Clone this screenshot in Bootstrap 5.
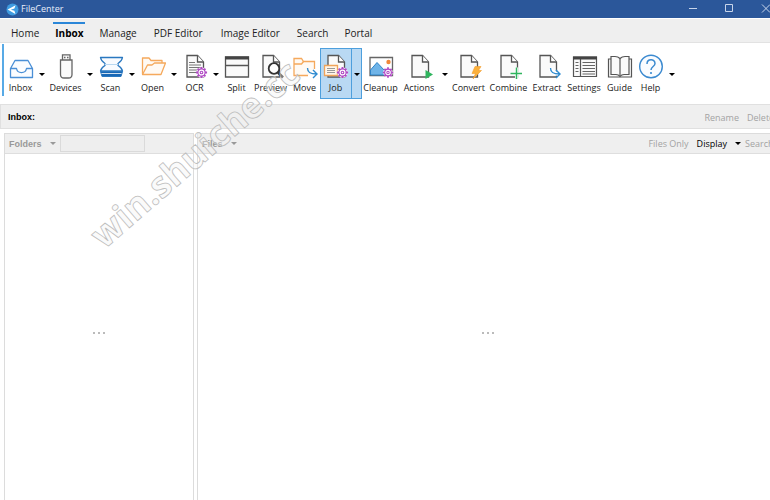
<!DOCTYPE html>
<html lang="en">
<head>
<meta charset="utf-8">
<meta name="viewport" content="width=device-width, initial-scale=1">
<title>FileCenter</title>
<link rel="stylesheet" href="https://cdn.jsdelivr.net/npm/bootstrap@5.3.0/dist/css/bootstrap.min.css">
<style>
  body { font-family: "Open Sans", "Noto Sans", sans-serif; font-size: 9px; line-height: 12px; color: #222; background: #fff; }
  button { border: 0; background: none; padding: 0; color: inherit; white-space: nowrap; }
  svg { display: block; flex: none; }
  .titlebar { height: 18px; background: #2b579a; color: #e8eefa; padding-left: 6px; }
  .titlebar .brand-name { margin-left: 2px; padding-bottom: 1px; }
  .win-btn { width: 37px; height: 14px; }
  .win-btn.edge { width: 22px; }
  .tabs { height: 24px; margin-top: 1px; background: #efefef; border-bottom: 1px solid #e2e2e2; padding-left: 3px; font-size: 10px; }
  .tabs a { color: #222; text-decoration: none; padding: 8px 8px 0; white-space: nowrap; line-height: 12px; }
  .tabs a.wide { padding-left: 9px; padding-right: 9px; }
  .tabs a.current { color: #000; font-weight: 700; position: relative; }
  .tabs a.current::before { content: ""; position: absolute; left: 6px; right: 6px; top: 3px; height: 2px; background: #2a86d8; }
  .toolbar { height: 61px; padding: 5px 0 5px 1px; }
  .grip { width: 2px; height: 52px; background: #58aae6; margin: 1px 0 0 2px; }
  .tool { width: 31px; height: 51px; padding-top: 5px; }
  .tool.t34 { width: 34px; } .tool.t37 { width: 37px; } .tool.t40 { width: 40px; } .tool.t43 { width: 43px; }
  .tool span { margin-top: 2px; }
  .drop { width: 11px; height: 51px; }
  .caret { width: 0; height: 0; border: 3px solid transparent; border-top-color: currentColor; border-bottom: 0; }
  .drop .caret { margin-top: 2px; color: #000; }
  .picked { background: #b9d9f3; box-shadow: inset 0 0 0 1px #4d9fdd; }
  .picked .drop { border-left: 1px solid #4d9fdd; }
  .pathbar { height: 25px; background: #efefef; border: 1px solid #e0e0e0; border-width: 1px 0 1px 1px; padding-left: 7px; }
  .pathbar .off { padding-top: 2px; }
  .arial { font-family: "Liberation Sans", Arial, sans-serif; font-weight: 700; }
  .off { color: #a3a3a3; }
  .cut { width: 23px; text-align: left; }
  .cut.more { width: 25px; }
  .panes { margin: 4px 0 0 4px; gap: 3px; }
  .folders { flex: 0 0 190px; border: 1px solid #dcdcdc; border-bottom: 0; }
  .files { border-left: 1px solid #dcdcdc; border-top: 1px solid #dcdcdc; min-width: 0; }
  .pane-head { height: 20px; background: #efefef; border-bottom: 1px solid #dedede; padding-left: 4px; color: #999; }
  .filter { width: 85px; height: 17px; background: #eee; border: 1px solid #dadada; border-radius: 0; padding: 0 3px; font-size: 9px; }
  .dots { gap: 3px; padding-top: 12px; }
  .files .dots { padding-left: 8px; }
  .dots i { width: 2px; height: 2px; background: #bbb; }
  .ghost { left: 0; top: 0; pointer-events: none; }
  .ghost text { font: 700 36px "Open Sans", sans-serif; }
</style>
<script src="https://cdn.jsdelivr.net/npm/bootstrap@5.3.0/dist/js/bootstrap.bundle.min.js"></script>
</head>
<body class="d-flex flex-column vh-100 overflow-hidden position-relative">

<svg width="0" height="0" class="position-absolute" aria-hidden="true">
  <defs>
    <symbol id="page" viewBox="0 0 27 27">
      <path d="M6 2.5H16.5L22.5 9V24H6Z" fill="#fafafa" stroke="#555" stroke-width="1.3"/>
      <path d="M16.5 2.5V9H22.5" fill="#fff" stroke="#555" stroke-width="1.3"/>
    </symbol>
    <symbol id="gear" viewBox="0 0 14 14">
      <circle cx="7" cy="7" r="5.6" fill="#fff"/>
      <g stroke="#b04ac4" fill="none">
        <circle cx="7" cy="7" r="3.9" stroke-width="1.3"/>
        <circle cx="7" cy="7" r="1.4" stroke-width="1.2"/>
        <path d="M7 1V3.2M7 10.8V13M1 7H3.2M10.8 7H13M2.8 2.8L4.3 4.3M9.7 9.7L11.2 11.2M11.2 2.8L9.7 4.3M4.3 9.7L2.8 11.2" stroke-width="2"/>
      </g>
    </symbol>
    <symbol id="bend" viewBox="0 0 12 12">
      <path d="M1.5 1C1.5 5 3.5 7 10.5 7M7 3L11 7L7 11" fill="none" stroke="#2e8bd0" stroke-width="1.4"/>
    </symbol>
  </defs>
</svg>

<header class="titlebar d-flex align-items-center flex-shrink-0">
  <svg width="13" height="13" viewBox="0 0 13 13" aria-hidden="true">
    <circle cx="6.5" cy="6.5" r="6" fill="#3f9be0"/>
    <path d="M1.6 6.6L9.6 2.2L8.4 5.4L4.8 6.7L8.4 7.8L9.4 11Z" fill="#fff"/>
  </svg>
  <span class="brand-name">FileCenter</span>
  <div class="ms-auto d-flex">
    <button class="win-btn" aria-label="Minimize"><svg width="37" height="14" viewBox="0 0 37 14"><path d="M15 6.5H23" stroke="#c8d5ea"/></svg></button>
    <button class="win-btn" aria-label="Maximize"><svg width="37" height="14" viewBox="0 0 37 14"><path d="M14.5 2.5H21.5V9.5H14.5Z" fill="none" stroke="#c8d5ea"/></svg></button>
    <button class="win-btn edge" aria-label="Close"><svg width="22" height="14" viewBox="0 0 22 14"><path d="M14 2.5L22 10.5M14 10.5L22 2.5" stroke="#c8d5ea"/></svg></button>
  </div>
</header>

<nav class="tabs d-flex flex-shrink-0">
  <a href="#">Home</a>
  <a href="#" class="current" aria-current="page">Inbox</a>
  <a href="#">Manage</a>
  <a href="#" class="wide">PDF Editor</a>
  <a href="#" class="wide">Image Editor</a>
  <a href="#">Search</a>
  <a href="#">Portal</a>
</nav>

<div class="d-flex flex-shrink-0">
<div class="grip"></div>
<div class="toolbar d-flex align-items-start" role="toolbar" aria-label="Inbox tools">
  <button class="tool d-flex flex-column align-items-center">
    <svg width="27" height="27" viewBox="0 0 27 27"><path d="M3.5 15.5L8 7.5H21L25.5 15.5V24.5H3.5V15.5H9.5C10.5 21 18.5 21 19.5 15.5H25.5" fill="#fafcff" stroke="#4a8fd6" stroke-width="1.3" stroke-linejoin="round"/></svg>
    <span>Inbox</span></button>
  <button class="drop d-flex align-items-center justify-content-center" aria-label="Inbox options"><b class="caret"></b></button>
  <button class="tool t37 d-flex flex-column align-items-center">
    <svg width="27" height="27" viewBox="0 0 27 27"><g fill="#fafafa" stroke="#666" stroke-width="1.3"><path d="M10.5 7V1.8H18V7"/><path d="M8.5 7H20V21.5Q20 25 16.5 25H12Q8.5 25 8.5 21.5Z"/><path d="M12 4.5H13.5M15 4.5H16.5" stroke-width="1.6"/></g></svg>
    <span>Devices</span></button>
  <button class="drop d-flex align-items-center justify-content-center" aria-label="Devices options"><b class="caret"></b></button>
  <button class="tool d-flex flex-column align-items-center">
    <svg width="27" height="27" viewBox="0 0 27 27"><g stroke="#2a78c0" stroke-linejoin="round"><path d="M3.5 4.5H25.5Q25 8 21 10.5V12.5Q25 15 25.5 18H3.5Q4 15 8 12.5V10.5Q4 8 3.5 4.5Z" fill="#f8fbff" stroke-width="1.3"/><path d="M8 11.5H21" stroke="#b8d8f2"/><path d="M3.5 18.5H25.5L24 23.5H5Z" fill="#1867b5"/><path d="M4.5 20.5H24.5" stroke="#fff" stroke-width=".8"/></g></svg>
    <span>Scan</span></button>
  <button class="drop d-flex align-items-center justify-content-center" aria-label="Scan options"><b class="caret"></b></button>
  <button class="tool d-flex flex-column align-items-center">
    <svg width="27" height="27" viewBox="0 0 27 27"><g fill="#fffaf4" stroke="#f5a95c" stroke-width="1.3" stroke-linejoin="round"><path d="M3.5 21V5H10L12 7.5H23V10"/><path d="M3.5 21.5L8.5 12H13L15.5 10H26.5L22 21.5Z"/></g></svg>
    <span>Open</span></button>
  <button class="drop d-flex align-items-center justify-content-center" aria-label="Open options"><b class="caret"></b></button>
  <button class="tool d-flex flex-column align-items-center">
    <svg width="27" height="27" viewBox="0 0 27 27"><use href="#page" width="27" height="27"/><path d="M8 9.5H14M8 12H20M8 14.5H20M8 17H17M8 19.5H15" stroke="#777"/><use href="#gear" x="14" y="13" width="13" height="13"/></svg>
    <span>OCR</span></button>
  <button class="drop d-flex align-items-center justify-content-center" aria-label="OCR options"><b class="caret"></b></button>
  <button class="tool d-flex flex-column align-items-center">
    <svg width="27" height="27" viewBox="0 0 27 27"><path d="M2.5 4H25.5V24H2.5ZM2.5 12.5H25.5" fill="#fafafa" stroke="#555" stroke-width="1.3"/><path d="M2 5H26" stroke="#444" stroke-width="3"/></svg>
    <span>Split</span></button>
  <button class="tool t37 d-flex flex-column align-items-center">
    <svg width="27" height="27" viewBox="0 0 27 27"><use href="#page" width="27" height="27"/><circle cx="17" cy="15.5" r="5.3" fill="#fff" stroke="#333" stroke-width="1.8"/><path d="M21 19.5L26 24.5" stroke="#333" stroke-width="2.6"/></svg>
    <span>Preview</span></button>
  <button class="tool d-flex flex-column align-items-center">
    <svg width="27" height="27" viewBox="0 0 27 27"><g fill="#fffaf4" stroke="#f5a95c" stroke-width="1.3"><path d="M17 22.5H3V5.5H10.5L12.5 8.5H23.5V16"/><path d="M3 11H10.5L12.5 8.5" fill="none"/></g><use href="#bend" x="15" y="14" width="12" height="12"/></svg>
    <span>Move</span></button>
  <div class="picked d-flex">
    <button class="tool d-flex flex-column align-items-center" aria-pressed="true">
      <svg width="27" height="27" viewBox="0 0 27 27"><use href="#page" width="27" height="27"/><path d="M2.5 12.5H15.5V22.5H2.5Z" fill="#fff6ea" stroke="#f0a45a" stroke-width="1.3"/><path d="M5 15.5H13M5 17.5H13M5 19.5H13" stroke="#999"/><use href="#gear" x="14" y="13" width="13" height="13"/></svg>
      <span>Job</span></button>
    <button class="drop d-flex align-items-center justify-content-center" aria-label="Job options"><b class="caret"></b></button>
  </div>
  <button class="tool t37 d-flex flex-column align-items-center">
    <svg width="27" height="27" viewBox="0 0 27 27"><path d="M3 4.5H25.5V22.5H3Z" fill="#fff" stroke="#666" stroke-width="1.3"/><path d="M3.5 17L10 9.5L18 18V22H3.5Z" fill="#6fb4e8" stroke="#2e84c9"/><circle cx="21.5" cy="9" r="2.2" fill="#f0883a"/><use href="#gear" x="15" y="13" width="12" height="13"/></svg>
    <span>Cleanup</span></button>
  <button class="tool t40 d-flex flex-column align-items-center">
    <svg width="27" height="27" viewBox="0 0 27 27"><use href="#page" width="27" height="27"/><path d="M19.5 17L27 21.5L19.5 26Z" fill="#2fb55e"/></svg>
    <span>Actions</span></button>
  <button class="drop d-flex align-items-center justify-content-center" aria-label="Actions options"><b class="caret"></b></button>
  <button class="tool t37 d-flex flex-column align-items-center">
    <svg width="27" height="27" viewBox="0 0 27 27"><use href="#page" width="27" height="27"/><path d="M20 13.5H26L23.5 17.5H26.5L18 26L20.5 20.5H17Z" fill="#fbb03b" stroke="#f39c2c" stroke-width=".6"/></svg>
    <span>Convert</span></button>
  <button class="tool t43 d-flex flex-column align-items-center">
    <svg width="27" height="27" viewBox="0 0 27 27"><use href="#page" width="27" height="27"/><path d="M21.5 14.5V26M15.5 20.5H27" stroke="#fff" stroke-width="3"/><path d="M21.5 14.5V26M15.5 20.5H27" stroke="#2fb55e" stroke-width="1.5"/></svg>
    <span>Combine</span></button>
  <button class="tool t34 d-flex flex-column align-items-center">
    <svg width="27" height="27" viewBox="0 0 27 27"><use href="#page" width="27" height="27"/><path d="M17 15C17 19 20 21 27 21" fill="none" stroke="#fff" stroke-width="4"/><use href="#bend" x="15" y="14" width="12" height="12"/></svg>
    <span>Extract</span></button>
  <button class="tool t40 d-flex flex-column align-items-center">
    <svg width="27" height="27" viewBox="0 0 27 27"><path d="M2.5 4H25.5V23.5H2.5ZM9.5 6V23.5" fill="#fafafa" stroke="#555" stroke-width="1.2"/><path d="M2 5H26" stroke="#444" stroke-width="3"/><path d="M4.5 9.5H7.5M4.5 12.5H7.5M4.5 15.5H7.5M4.5 18.5H7.5M11.5 9.5H24M11.5 12.5H24M11.5 15.5H24M11.5 18.5H24M11.5 21H24" stroke="#666"/></svg>
    <span>Settings</span></button>
  <button class="tool d-flex flex-column align-items-center">
    <svg width="27" height="27" viewBox="0 0 27 27"><g fill="#fafafa" stroke="#555" stroke-width="1.2"><path d="M5 6H2.5V24H25.5V6H23"/><path d="M14 5.5Q12 3.5 9 3.5H5V21.5H10Q12.5 21.5 14 23.5Q15.5 21.5 18 21.5H23V3.5H19Q16 3.5 14 5.5Z"/><path d="M14 5.5V23.5"/></g></svg>
    <span>Guide</span></button>
  <button class="tool d-flex flex-column align-items-center">
    <svg width="27" height="27" viewBox="0 0 27 27"><circle cx="14" cy="13.5" r="11.3" fill="#fafcff" stroke="#3b8ad0" stroke-width="1.4"/><path d="M10 11C10 5.5 18 5.5 18 10.5C18 13.5 14 13.5 14 17" fill="none" stroke="#3b8ad0" stroke-width="1.5"/><circle cx="14" cy="20" r="1.1" fill="#3b8ad0"/></svg>
    <span>Help</span></button>
  <button class="drop d-flex align-items-center justify-content-center" aria-label="Help options"><b class="caret"></b></button>
</div>
</div>

<div class="pathbar d-flex align-items-center flex-shrink-0 overflow-hidden">
  <span class="arial text-black">Inbox:</span>
  <button class="off ms-auto me-2" disabled>Rename</button>
  <button class="off cut" disabled>Delete</button>
</div>

<main class="panes d-flex flex-grow-1">
  <section class="folders d-flex flex-column">
    <div class="pane-head d-flex align-items-center">
      <button class="arial d-flex align-items-center gap-2">Folders <b class="caret"></b></button>
      <input class="filter ms-1" type="text" aria-label="Filter folders">
    </div>
    <div class="dots d-flex flex-grow-1 align-items-center justify-content-center"><i></i><i></i><i></i></div>
  </section>
  <section class="files d-flex flex-column flex-grow-1">
    <div class="pane-head d-flex align-items-center overflow-hidden">
      <button class="arial d-flex align-items-center gap-2">Files <b class="caret"></b></button>
      <button class="off ms-auto me-2" disabled>Files Only</button>
      <button class="text-black d-flex align-items-center gap-2 me-1">Display <b class="caret"></b></button>
      <button class="off cut more" disabled>Search</button>
    </div>
    <div class="dots d-flex flex-grow-1 align-items-center justify-content-center"><i></i><i></i><i></i></div>
  </section>
</main>

<svg class="ghost position-absolute" width="320" height="270" viewBox="0 0 320 270" aria-hidden="true">
  <text transform="translate(104 250) rotate(-41)" fill="#f4f4f4" fill-opacity=".4" stroke="#bdbdbd" stroke-width=".8">win.shuiche.cc</text>
</svg>
</body>
</html>
